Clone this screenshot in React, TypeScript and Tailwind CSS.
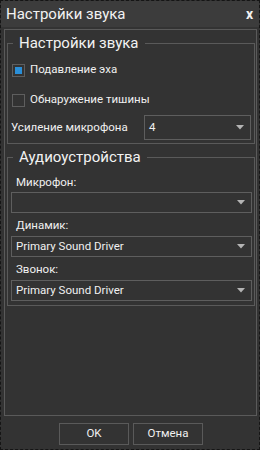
import React from "react";

const font = { fontFamily: 'Roboto, "Noto Sans", sans-serif' };

function Arrow() {
  return (
    <svg width="8" height="5" viewBox="0 0 8 5" className="shrink-0">
      <path d="M0 0 H8 L4 4.5 Z" fill="#b4b4b4" />
    </svg>
  );
}

function Combo({ value, h, className }: { value: string; h: string; className: string }) {
  return (
    <div className={`flex items-center justify-between border border-[#5e5e5e] pl-[4px] pr-[6px] ${h} ${className}`}>
      <span className="text-[11.5px] text-[#f0f0f0] leading-none">{value}</span>
      <Arrow />
    </div>
  );
}

function Check({ checked, label }: { checked: boolean; label: string }) {
  return (
    <div className="flex items-center h-[30px] pl-[4px]">
      <div className="w-[13px] h-[13px] border border-[#5e5e5e] flex items-center justify-center">
        {checked && <div className="w-[7px] h-[7px] bg-[#2a8fd8]" />}
      </div>
      <span className="ml-[5px] text-[11.5px] text-[#f0f0f0] leading-none">{label}</span>
    </div>
  );
}

export default function App() {
  return (
    <div
      style={font}
      className="w-[260px] h-[450px] bg-[#333333] border border-dashed border-[#151515] flex flex-col overflow-hidden"
    >
      <div className="h-[26px] bg-[#3c3c3c] flex items-center justify-between pl-[5px] pr-[6px] shrink-0">
        <span className="text-[15px] text-[#f2f2f2] leading-none">Настройки звука</span>
        <span className="text-[14px] font-bold text-[#f2f2f2] leading-none">x</span>
      </div>
      <div className="mt-[2px] ml-[3px] mr-[2px] flex-1 border border-[#5a5a5a] flex flex-col">
        <fieldset className="mt-[3px] ml-[2px] mr-[1px] border border-[#5a5a5a] px-[0px] pb-[3px]">
          <legend className="ml-[5px] px-[6px] text-[15px] text-[#f2f2f2] leading-[20px]">Настройки звука</legend>
          <div className="pt-[2px]">
            <Check checked label="Подавление эха" />
            <Check checked={false} label="Обнаружение тишины" />
            <div className="flex items-center h-[25px]">
              <span className="ml-[3px] w-[133px] text-[11.5px] text-[#f0f0f0] leading-none">Усиление микрофона</span>
              <Combo value="4" h="h-[25px]" className="w-[107px]" />
            </div>
          </div>
        </fieldset>
        <fieldset className="mt-[3px] ml-[2px] mr-[1px] border border-[#5a5a5a] pb-[4px]">
          <legend className="ml-[5px] px-[6px] text-[15px] text-[#f2f2f2] leading-[20px]">Аудиоустройства</legend>
          <div className="pt-[6px] h-[25px] pl-[8px] flex items-center text-[11.5px] text-[#f0f0f0] leading-none">Микрофон:</div>
          <Combo value="" h="h-[21px]" className="ml-[3px] mr-[2px]" />
          <div className="pt-[3px] h-[23px] pl-[8px] flex items-center text-[11.5px] text-[#f0f0f0] leading-none">Динамик:</div>
          <Combo value="Primary Sound Driver" h="h-[21px]" className="ml-[3px] mr-[2px]" />
          <div className="pt-[3px] h-[23px] pl-[8px] flex items-center text-[11.5px] text-[#f0f0f0] leading-none">Звонок:</div>
          <Combo value="Primary Sound Driver" h="h-[21px]" className="ml-[3px] mr-[2px]" />
        </fieldset>
      </div>
      <div className="h-[33px] shrink-0 flex justify-center items-start pt-[7px] gap-[4px] pl-[2px]">
        <button className="w-[70px] h-[22px] border border-[#5a5a5a] text-[11.5px] text-[#f0f0f0] leading-none">OK</button>
        <button className="w-[70px] h-[22px] border border-[#5a5a5a] text-[11.5px] text-[#f0f0f0] leading-none">Отмена</button>
      </div>
    </div>
  );
}
